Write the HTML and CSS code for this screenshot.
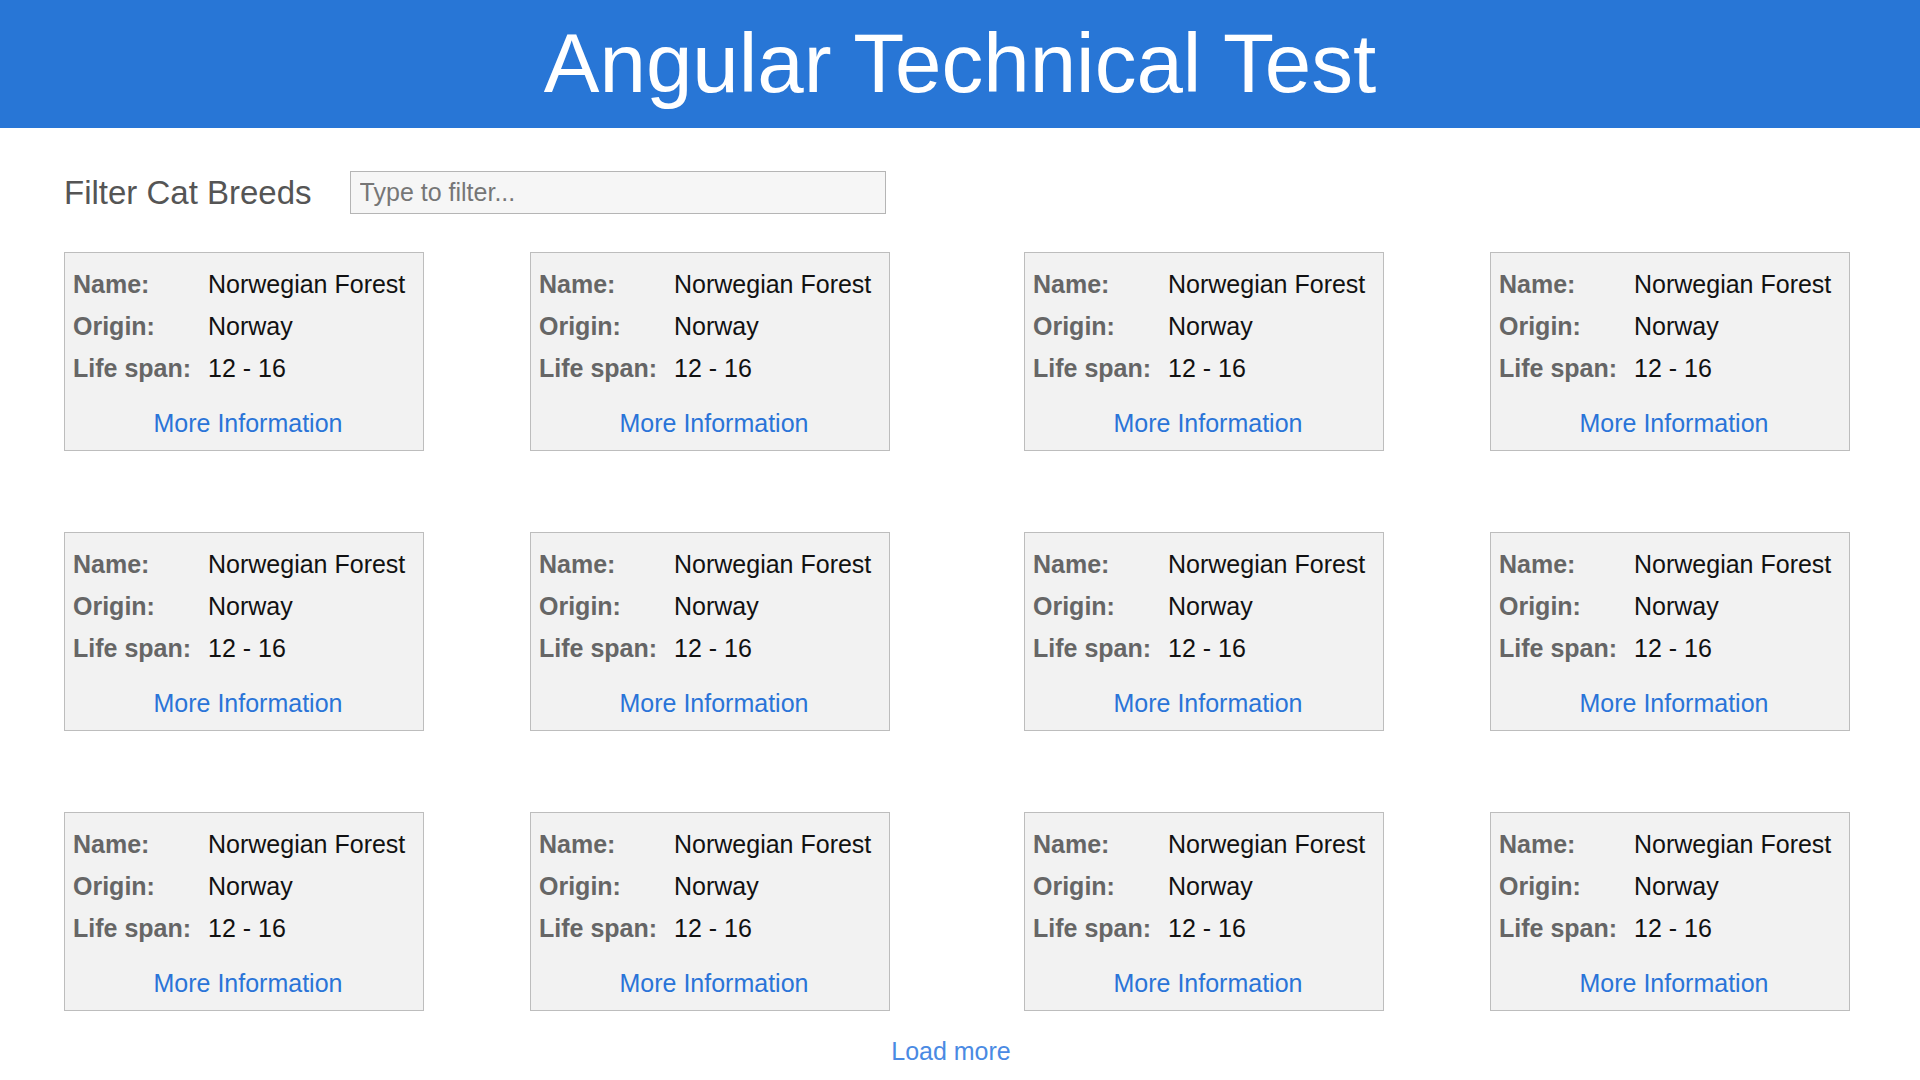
FILE: index.html
```html
<!DOCTYPE html>
<html lang="en">
<head>
<meta charset="utf-8">
<title>Angular Technical Test</title>
<link rel="stylesheet" href="styles.css">
</head>
<body>
<header class="app-header">
  <h1 class="app-title">Angular Technical Test</h1>
</header>
<main class="content">
  <div class="filter-row">
    <label class="filter-label" for="filter">Filter Cat Breeds</label>
    <input class="filter-input" id="filter" type="text" placeholder="Type to filter...">
  </div>
  <div class="breeds">
    <div class="breed-row">
      <div class="half">
        <div class="card"><div class="info"><span class="k">Name:</span><span class="v">Norwegian Forest</span><span class="k">Origin:</span><span class="v">Norway</span><span class="k">Life span:</span><span class="v">12 - 16</span></div><a class="more" href="#">More Information</a></div>
        <div class="card"><div class="info"><span class="k">Name:</span><span class="v">Norwegian Forest</span><span class="k">Origin:</span><span class="v">Norway</span><span class="k">Life span:</span><span class="v">12 - 16</span></div><a class="more" href="#">More Information</a></div>
      </div>
      <div class="half">
        <div class="card"><div class="info"><span class="k">Name:</span><span class="v">Norwegian Forest</span><span class="k">Origin:</span><span class="v">Norway</span><span class="k">Life span:</span><span class="v">12 - 16</span></div><a class="more" href="#">More Information</a></div>
        <div class="card"><div class="info"><span class="k">Name:</span><span class="v">Norwegian Forest</span><span class="k">Origin:</span><span class="v">Norway</span><span class="k">Life span:</span><span class="v">12 - 16</span></div><a class="more" href="#">More Information</a></div>
      </div>
    </div>
    <div class="breed-row">
      <div class="half">
        <div class="card"><div class="info"><span class="k">Name:</span><span class="v">Norwegian Forest</span><span class="k">Origin:</span><span class="v">Norway</span><span class="k">Life span:</span><span class="v">12 - 16</span></div><a class="more" href="#">More Information</a></div>
        <div class="card"><div class="info"><span class="k">Name:</span><span class="v">Norwegian Forest</span><span class="k">Origin:</span><span class="v">Norway</span><span class="k">Life span:</span><span class="v">12 - 16</span></div><a class="more" href="#">More Information</a></div>
      </div>
      <div class="half">
        <div class="card"><div class="info"><span class="k">Name:</span><span class="v">Norwegian Forest</span><span class="k">Origin:</span><span class="v">Norway</span><span class="k">Life span:</span><span class="v">12 - 16</span></div><a class="more" href="#">More Information</a></div>
        <div class="card"><div class="info"><span class="k">Name:</span><span class="v">Norwegian Forest</span><span class="k">Origin:</span><span class="v">Norway</span><span class="k">Life span:</span><span class="v">12 - 16</span></div><a class="more" href="#">More Information</a></div>
      </div>
    </div>
    <div class="breed-row">
      <div class="half">
        <div class="card"><div class="info"><span class="k">Name:</span><span class="v">Norwegian Forest</span><span class="k">Origin:</span><span class="v">Norway</span><span class="k">Life span:</span><span class="v">12 - 16</span></div><a class="more" href="#">More Information</a></div>
        <div class="card"><div class="info"><span class="k">Name:</span><span class="v">Norwegian Forest</span><span class="k">Origin:</span><span class="v">Norway</span><span class="k">Life span:</span><span class="v">12 - 16</span></div><a class="more" href="#">More Information</a></div>
      </div>
      <div class="half">
        <div class="card"><div class="info"><span class="k">Name:</span><span class="v">Norwegian Forest</span><span class="k">Origin:</span><span class="v">Norway</span><span class="k">Life span:</span><span class="v">12 - 16</span></div><a class="more" href="#">More Information</a></div>
        <div class="card"><div class="info"><span class="k">Name:</span><span class="v">Norwegian Forest</span><span class="k">Origin:</span><span class="v">Norway</span><span class="k">Life span:</span><span class="v">12 - 16</span></div><a class="more" href="#">More Information</a></div>
      </div>
    </div>
  </div>
  <div class="load-wrap">
    <a class="load-more" href="#">Load more</a>
  </div>
</main>
</body>
</html>
```

FILE: styles.css
```css
html, body {
  margin: 0;
  padding: 0;
  background: #ffffff;
  font-family: "Liberation Sans", Arial, sans-serif;
}

.app-header {
  background: #2876d6;
  height: 128px;
}

.app-title {
  margin: 0;
  color: #ffffff;
  font-weight: normal;
  font-size: 83.5px;
  line-height: 126px;
  text-align: center;
}

.content {
  padding: 43px 0 0 64px;
}

.filter-row {
  display: flex;
  align-items: center;
  gap: 38px;
  height: 43px;
}

.filter-label {
  font-size: 33px;
  color: #555555;
}

.filter-input {
  box-sizing: border-box;
  width: 536px;
  height: 43px;
  margin: 0;
  padding: 0 9px;
  border: 1px solid #b5b5b5;
  background: #f6f6f6;
  font-family: "Liberation Sans", Arial, sans-serif;
  font-size: 25px;
  color: #333333;
  outline: none;
}

.filter-input::placeholder {
  color: #767676;
}

.breeds {
  margin-top: 38px;
  display: flex;
  flex-direction: column;
  gap: 81px;
}

.breed-row {
  display: flex;
  gap: 134px;
}

.half {
  display: flex;
  gap: 106px;
}

.card {
  box-sizing: border-box;
  width: 360px;
  height: 199px;
  background: #f2f2f2;
  border: 1px solid #bdbdbd;
  padding: 10px 0 6px 8px;
  font-size: 25px;
  display: flex;
  flex-direction: column;
}

.info {
  display: grid;
  grid-template-columns: 135px 1fr;
  line-height: 42px;
}

.k {
  font-weight: bold;
  color: #666666;
}

.v {
  color: #111111;
}

.more {
  margin-top: 13px;
  line-height: 42px;
  text-align: center;
  color: #2a74d8;
  text-decoration: none;
}

.load-wrap {
  display: flex;
  justify-content: center;
  padding-right: 82px;
  margin-top: 26px;
}

.load-more {
  font-size: 25px;
  line-height: 29px;
  color: #4a8ae3;
  text-decoration: none;
}
```
